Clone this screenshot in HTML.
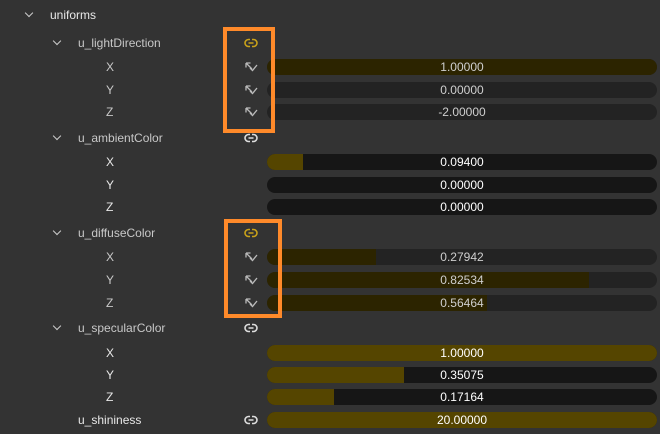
<!DOCTYPE html>
<html><head><style>
body{margin:0;width:660px;height:434px;background:#333;overflow:hidden;font-family:"Liberation Sans",sans-serif;font-size:12px;color:#e8e8e8;position:relative}
.t{position:absolute;line-height:14px;white-space:nowrap}
.dim{color:#c8c8c8}
.chev{position:absolute;width:5px;height:5px;border-right:1.5px solid #ccc;border-bottom:1.5px solid #ccc;transform:rotate(45deg)}
.bar{position:absolute;left:267px;width:390px;height:16px;border-radius:8px;background:#161616;overflow:hidden}
.bar.off{background:#232323}
.bar i{position:absolute;left:0;top:0;bottom:0;background:#554500}
.bar.off i{background:#2c2400}
.bar span{position:absolute;left:0;right:0;top:1px;text-align:center;color:#fff;line-height:14px}
.bar.off span{color:#cfcfcf}
.ic{position:absolute;left:244px}
.box{position:absolute;border:4px solid #ff8a2a;box-sizing:border-box}
</style></head><body>
<div class="chev" style="left:26px;top:10px"></div><div class="t" style="left:50px;top:8px">uniforms</div>

<div class="chev" style="left:54px;top:38px"></div><div class="t dim" style="left:78px;top:36px">u_lightDirection</div>
<div class="chev" style="left:54px;top:133px"></div><div class="t dim" style="left:78px;top:131px">u_ambientColor</div>
<div class="chev" style="left:54px;top:228px"></div><div class="t dim" style="left:78px;top:226px">u_diffuseColor</div>
<div class="chev" style="left:54px;top:323px"></div><div class="t dim" style="left:78px;top:321px">u_specularColor</div>
<div class="t" style="left:78px;top:413px">u_shininess</div>

<div class="t dim" style="left:106px;top:60px">X</div><div class="t dim" style="left:106px;top:83px">Y</div><div class="t dim" style="left:106px;top:105px">Z</div>
<div class="t" style="left:106px;top:155px">X</div><div class="t" style="left:106px;top:178px">Y</div><div class="t" style="left:106px;top:200px">Z</div>
<div class="t dim" style="left:106px;top:250px">X</div><div class="t dim" style="left:106px;top:273px">Y</div><div class="t dim" style="left:106px;top:296px">Z</div>
<div class="t" style="left:106px;top:346px">X</div><div class="t" style="left:106px;top:368px">Y</div><div class="t" style="left:106px;top:390px">Z</div>

<!-- link icons -->
<svg class="ic" style="top:38px" width="14" height="10"><path d="M6 1.5H4.5a3.5 3.5 0 0 0 0 7H6M8 1.5h1.5a3.5 3.5 0 0 1 0 7H8M4.5 5h5" fill="none" stroke="#c9a21a" stroke-width="1.6"/></svg>
<svg class="ic" style="top:133px" width="14" height="10"><path d="M6 1.5H4.5a3.5 3.5 0 0 0 0 7H6M8 1.5h1.5a3.5 3.5 0 0 1 0 7H8M4.5 5h5" fill="none" stroke="#ddd" stroke-width="1.6"/></svg>
<svg class="ic" style="top:228px" width="14" height="10"><path d="M6 1.5H4.5a3.5 3.5 0 0 0 0 7H6M8 1.5h1.5a3.5 3.5 0 0 1 0 7H8M4.5 5h5" fill="none" stroke="#c9a21a" stroke-width="1.6"/></svg>
<svg class="ic" style="top:323px" width="14" height="10"><path d="M6 1.5H4.5a3.5 3.5 0 0 0 0 7H6M8 1.5h1.5a3.5 3.5 0 0 1 0 7H8M4.5 5h5" fill="none" stroke="#ddd" stroke-width="1.6"/></svg>
<svg class="ic" style="top:415px" width="14" height="10"><path d="M6 1.5H4.5a3.5 3.5 0 0 0 0 7H6M8 1.5h1.5a3.5 3.5 0 0 1 0 7H8M4.5 5h5" fill="none" stroke="#ddd" stroke-width="1.6"/></svg>

<!-- linked-child icons -->
<svg class="ic" style="top:62px" width="14" height="10"><path d="M2 1v4.5M2 1h4.5M2 1l6 6M6 6l2.5 2.5L13 3" fill="none" stroke="#bbb" stroke-width="1.3"/></svg>
<svg class="ic" style="top:85px" width="14" height="10"><path d="M2 1v4.5M2 1h4.5M2 1l6 6M6 6l2.5 2.5L13 3" fill="none" stroke="#bbb" stroke-width="1.3"/></svg>
<svg class="ic" style="top:107px" width="14" height="10"><path d="M2 1v4.5M2 1h4.5M2 1l6 6M6 6l2.5 2.5L13 3" fill="none" stroke="#bbb" stroke-width="1.3"/></svg>
<svg class="ic" style="top:252px" width="14" height="10"><path d="M2 1v4.5M2 1h4.5M2 1l6 6M6 6l2.5 2.5L13 3" fill="none" stroke="#bbb" stroke-width="1.3"/></svg>
<svg class="ic" style="top:275px" width="14" height="10"><path d="M2 1v4.5M2 1h4.5M2 1l6 6M6 6l2.5 2.5L13 3" fill="none" stroke="#bbb" stroke-width="1.3"/></svg>
<svg class="ic" style="top:298px" width="14" height="10"><path d="M2 1v4.5M2 1h4.5M2 1l6 6M6 6l2.5 2.5L13 3" fill="none" stroke="#bbb" stroke-width="1.3"/></svg>

<!-- bars -->
<div class="bar off" style="top:59px"><i style="width:390px"></i><span>1.00000</span></div>
<div class="bar off" style="top:82px"><i style="width:0"></i><span>0.00000</span></div>
<div class="bar off" style="top:104px"><i style="width:0"></i><span>-2.00000</span></div>
<div class="bar" style="top:154px"><i style="width:36px"></i><span>0.09400</span></div>
<div class="bar" style="top:177px"><i style="width:0"></i><span>0.00000</span></div>
<div class="bar" style="top:199px"><i style="width:0"></i><span>0.00000</span></div>
<div class="bar off" style="top:249px"><i style="width:109px"></i><span>0.27942</span></div>
<div class="bar off" style="top:272px"><i style="width:322px"></i><span>0.82534</span></div>
<div class="bar off" style="top:295px"><i style="width:220px"></i><span>0.56464</span></div>
<div class="bar" style="top:345px"><i style="width:390px"></i><span>1.00000</span></div>
<div class="bar" style="top:367px"><i style="width:137px"></i><span>0.35075</span></div>
<div class="bar" style="top:389px"><i style="width:67px"></i><span>0.17164</span></div>
<div class="bar" style="top:412px"><i style="width:390px"></i><span>20.00000</span></div>

<div class="box" style="left:223px;top:27px;width:52px;height:106px"></div>
<div class="box" style="left:224px;top:219px;width:58px;height:99px"></div>
</body></html>
